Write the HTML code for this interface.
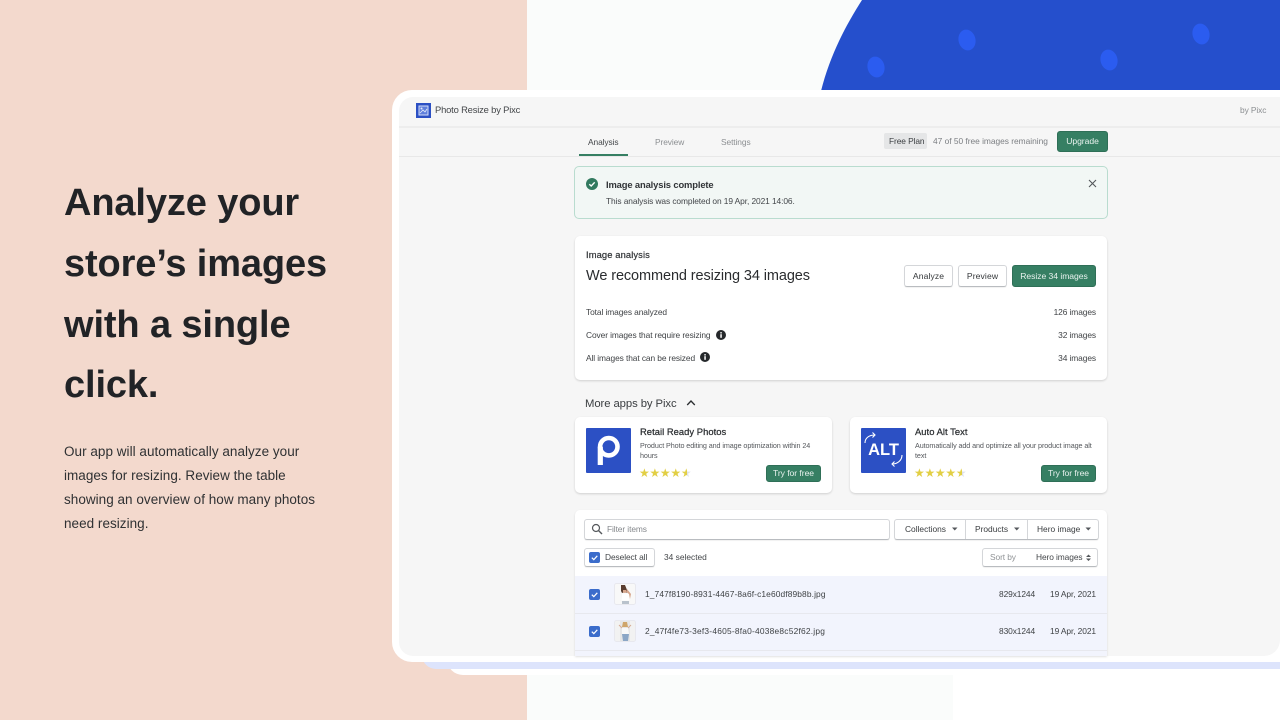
<!DOCTYPE html>
<html><head><meta charset="utf-8">
<style>
html,body{margin:0;padding:0;width:1280px;height:720px;overflow:hidden;background:#fff}
body{position:relative;font-family:"Liberation Sans",sans-serif;color:#202223}
.a,.t{position:absolute}
.t{white-space:nowrap;line-height:14px;font-size:8.4px;letter-spacing:-.09px;color:#3f4245;filter:blur(.25px)}
.h{left:64px;font-size:38px;line-height:46px;font-weight:700;color:#212326;white-space:nowrap;position:absolute;letter-spacing:-.12px}
.p{left:64px;font-size:13.5px;line-height:24px;color:#2f3133;white-space:nowrap;position:absolute;letter-spacing:.03px}
.card{position:absolute;background:#fff;border-radius:5px;box-shadow:0 1px 2px rgba(0,0,0,.16)}
.btn{position:absolute;background:#fff;border:1px solid #d4d6d9;border-bottom-color:#b9bcc0;border-radius:3px;box-sizing:border-box;text-align:center;font-size:8.6px;color:#34373a;letter-spacing:.1px;white-space:nowrap;box-shadow:0 1px 1px rgba(0,0,0,.06)}
.g{position:absolute;background:#367f63;border-radius:3px;box-sizing:border-box;border:1px solid #2f6f57;text-align:center;font-size:8.6px;color:#e8f2ee;letter-spacing:-.05px;white-space:nowrap}
.cb{position:absolute;width:11px;height:11px;background:#3b6ccb;border-radius:2px}
.cb svg{display:block}
.stars{position:absolute;color:#e2cf45;font-size:12px;letter-spacing:-.3px;line-height:12px;white-space:nowrap}
.d{font-size:7.2px;line-height:10px;color:#55585c;letter-spacing:-.09px}
</style></head><body>
<div class="a" style="left:0;top:0;width:527px;height:720px;background:#f3d9cd"></div>
<div class="a" style="left:527px;top:0;width:753px;height:720px;background:#fafcfb"></div>
<div class="a" style="left:953px;top:670px;width:327px;height:50px;background:#fff"></div>
<svg class="a" style="left:800px;top:0" width="480" height="92" viewBox="0 0 480 92">
<path d="M21 91C30 55 46 25 62 0H480V91Z" fill="#254fcc"/>
<ellipse cx="76" cy="67" rx="8.5" ry="10.5" transform="rotate(-14 76 67)" fill="#2b5cf0"/>
<ellipse cx="167" cy="40" rx="8.5" ry="10.5" transform="rotate(-14 167 40)" fill="#2b5cf0"/>
<ellipse cx="309" cy="60" rx="8.5" ry="10.5" transform="rotate(-14 309 60)" fill="#2b5cf0"/>
<ellipse cx="401" cy="34" rx="8.5" ry="10.5" transform="rotate(-14 401 34)" fill="#2b5cf0"/>
</svg>

<div class="h" style="top:180px">Analyze your</div>
<div class="h" style="top:241px">store’s images</div>
<div class="h" style="top:302px">with a single</div>
<div class="h" style="top:362px">click.</div>
<div class="p" style="top:440px">Our app will automatically analyze your</div>
<div class="p" style="top:464px">images for resizing. Review the table</div>
<div class="p" style="top:488px">showing an overview of how many photos</div>
<div class="p" style="top:512px">need resizing.</div>

<div class="a" style="left:447px;top:640px;width:900px;height:35px;background:#fff;border-radius:0 0 0 16px"></div>
<div class="a" style="left:422px;top:640px;width:900px;height:29px;background:#dde4fc;border-radius:0 0 0 14px"></div>
<div class="a" style="left:392px;top:90px;width:920px;height:572px;background:#fff;border-radius:20px"></div>
<div class="a" style="left:399px;top:97px;width:881px;height:559px;background:#f6f6f6;border-radius:14px 0 16px 14px;overflow:hidden">
  <div class="a" style="left:0;top:29px;width:881px;height:2px;background:#ededed"></div>
  <div class="a" style="left:0;top:59px;width:881px;height:1px;background:#e8e8e8"></div>
  <div class="a" style="left:180px;top:57px;width:49px;height:2px;background:#367f63"></div>
</div>

<svg class="a" style="left:416px;top:103px" width="15" height="15" viewBox="0 0 15 15">
<rect width="15" height="15" fill="#2c50c4"/>
<rect x="3" y="3" width="9" height="9" fill="#5f7fdc" stroke="#d5def7" stroke-width="1"/>
<path d="M4 10l3-3 2 2 2-3" stroke="#e6ecfb" fill="none" stroke-width=".8"/>
<circle cx="5.5" cy="5.5" r="1" fill="#e6ecfb"/>
</svg>
<div class="t" style="left:435px;top:103px;font-size:9.4px;color:#44474a;letter-spacing:-.17px">Photo Resize by Pixc</div>
<div class="t" style="left:1240px;top:103px;color:#8b8e91">by Pixc</div>

<div class="t" style="left:588px;top:135px;color:#44474a">Analysis</div>
<div class="t" style="left:655px;top:135px;color:#8c8f92">Preview</div>
<div class="t" style="left:721px;top:135px;color:#8c8f92">Settings</div>

<div class="a" style="left:884px;top:133px;width:43px;height:16px;background:#e5e6e7;border-radius:2px"></div>
<div class="t" style="left:889px;top:134px;color:#3c3f42">Free Plan</div>
<div class="t" style="left:933px;top:134px;color:#7c7f83;letter-spacing:-.02px">47 of 50 free images remaining</div>
<div class="g" style="left:1057px;top:131px;width:51px;height:21px;line-height:19px">Upgrade</div>

<div class="a" style="left:574px;top:166px;width:534px;height:53px;box-sizing:border-box;background:#f2f7f5;border:1px solid #b9dccf;border-radius:5px"></div>
<svg class="a" style="left:586px;top:178px" width="12" height="12" viewBox="0 0 12 12"><circle cx="6" cy="6" r="6" fill="#327a5f"/><path d="M3.3 6.2l1.9 1.8 3.5-3.7" stroke="#fff" stroke-width="1.4" fill="none"/></svg>
<div class="t" style="left:606px;top:178px;font-size:9.4px;font-weight:700;color:#313437;letter-spacing:-.13px">Image analysis complete</div>
<div class="t" style="left:606px;top:194px;color:#43464a">This analysis was completed on 19 Apr, 2021 14:06.</div>
<svg class="a" style="left:1088px;top:179px" width="9" height="9" viewBox="0 0 9 9"><path d="M1 1l7 7M8 1L1 8" stroke="#54575b" stroke-width="1.1"/></svg>

<div class="card" style="left:575px;top:236px;width:532px;height:144px"></div>
<div class="t" style="left:586px;top:248px;font-size:9.4px;color:#2f3235;-webkit-text-stroke:.2px #2f3235;letter-spacing:.1px">Image analysis</div>
<div class="t" style="left:586px;top:267px;font-size:14.5px;line-height:18px;color:#2a2c2f;letter-spacing:-.1px">We recommend resizing 34 images</div>
<div class="btn" style="left:904px;top:265px;width:49px;height:22px;line-height:20px">Analyze</div>
<div class="btn" style="left:958px;top:265px;width:49px;height:22px;line-height:20px">Preview</div>
<div class="g" style="left:1012px;top:265px;width:84px;height:22px;line-height:20px">Resize 34 images</div>

<div class="t" style="left:586px;top:305px">Total images analyzed</div>
<div class="t" style="left:586px;top:328px">Cover images that require resizing</div>
<div class="t" style="left:586px;top:351px">All images that can be resized</div>
<svg class="a" style="left:716px;top:330px" width="10" height="10" viewBox="0 0 10 10"><circle cx="5" cy="5" r="5" fill="#25282b"/><rect x="4.3" y="4.2" width="1.5" height="3.6" fill="#fff"/><rect x="4.3" y="2.1" width="1.5" height="1.4" fill="#fff"/></svg>
<svg class="a" style="left:700px;top:352px" width="10" height="10" viewBox="0 0 10 10"><circle cx="5" cy="5" r="5" fill="#25282b"/><rect x="4.3" y="4.2" width="1.5" height="3.6" fill="#fff"/><rect x="4.3" y="2.1" width="1.5" height="1.4" fill="#fff"/></svg>
<div class="t" style="right:184px;top:305px">126 images</div>
<div class="t" style="right:184px;top:328px">32 images</div>
<div class="t" style="right:184px;top:351px">34 images</div>

<div class="t" style="left:585px;top:397px;font-size:11.3px;color:#3a3d40;letter-spacing:-.08px">More apps by Pixc</div>
<svg class="a" style="left:686px;top:399px" width="10" height="8" viewBox="0 0 10 8"><path d="M1.2 6L5 2l3.8 4" stroke="#2a2d30" stroke-width="1.3" fill="none"/></svg>

<div class="card" style="left:575px;top:417px;width:257px;height:76px"></div>
<div class="a" style="left:586px;top:428px;width:45px;height:45px;background:#2c50c4;border-radius:1px"></div>
<svg class="a" style="left:586px;top:428px" width="45" height="45" viewBox="0 0 45 45" fill="none" stroke="#fff"><circle cx="22.800" cy="18.700" r="8.700" stroke-width="4.600"/><path d="M14.300 18.700V37" stroke-width="5.200"/></svg>
<div class="t" style="left:640px;top:425px;font-size:9.4px;color:#2d3033;-webkit-text-stroke:.25px #2d3033;letter-spacing:.04px">Retail Ready Photos</div>
<div class="t d" style="left:640px;top:441px">Product Photo editing and image optimization within 24<br>hours</div>
<div class="stars" style="left:639px;top:467px">★★★★<span style="background:linear-gradient(90deg,#e2cf45 60%,#dde1ec 60%);-webkit-background-clip:text;background-clip:text;color:transparent">★</span></div>
<div class="g" style="left:766px;top:465px;width:55px;height:17px;line-height:15px">Try for free</div>

<div class="card" style="left:850px;top:417px;width:257px;height:76px"></div>
<div class="a" style="left:861px;top:428px;width:45px;height:45px;background:#2c50c4;border-radius:1px"></div>
<div class="a" style="left:861px;top:441px;width:45px;text-align:center;font-size:16.5px;line-height:18px;font-weight:700;color:#fff">ALT</div>
<svg class="a" style="left:861px;top:428px" width="45" height="45" viewBox="0 0 45 45" fill="none" stroke="#fff" stroke-width="1.1"><path d="M4 15C4 10 8 7 14 7M11.500 4.500L14 7l-2.500 2.500M41 27c0 5-4 9-10 9M33.500 33.500L31 36l2.500 2.500"/></svg>
<div class="t" style="left:915px;top:425px;font-size:9.4px;color:#2d3033;-webkit-text-stroke:.25px #2d3033;letter-spacing:.04px">Auto Alt Text</div>
<div class="t d" style="left:915px;top:441px">Automatically add and optimize all your product image alt<br>text</div>
<div class="stars" style="left:914px;top:467px">★★★★<span style="background:linear-gradient(90deg,#e2cf45 60%,#dde1ec 60%);-webkit-background-clip:text;background-clip:text;color:transparent">★</span></div>
<div class="g" style="left:1041px;top:465px;width:55px;height:17px;line-height:15px">Try for free</div>

<div class="a" style="left:575px;top:510px;width:532px;height:146px;background:#fff;border-radius:5px 5px 0 0;box-shadow:0 1px 2px rgba(0,0,0,.12);overflow:hidden">
  <div class="a" style="left:0;top:66px;width:532px;height:37px;background:#f2f4fd"></div>
  <div class="a" style="left:0;top:103px;width:532px;height:1px;background:#e7e8ee"></div>
  <div class="a" style="left:0;top:104px;width:532px;height:36px;background:#f2f4fd"></div>
  <div class="a" style="left:0;top:140px;width:532px;height:1px;background:#e7e8ee"></div>
  <div class="a" style="left:0;top:141px;width:532px;height:6px;background:#f2f4fd"></div>
</div>
<div class="btn" style="left:584px;top:519px;width:306px;height:21px;background:#fff"></div>
<svg class="a" style="left:591px;top:523px" width="12" height="12" viewBox="0 0 12 12"><circle cx="5" cy="5" r="3.500" stroke="#55585c" stroke-width="1.2" fill="none"/><path d="M7.600 7.600L11 11" stroke="#55585c" stroke-width="1.400"/></svg>
<div class="t" style="left:607px;top:522px;color:#85888c">Filter items</div>
<div class="btn" style="left:894px;top:519px;width:205px;height:21px"></div>
<div class="a" style="left:965px;top:520px;width:1px;height:19px;background:#d4d6d9"></div>
<div class="a" style="left:1027px;top:520px;width:1px;height:19px;background:#d4d6d9"></div>
<div class="t" style="left:905px;top:522px;color:#393c3f;letter-spacing:0">Collections</div>
<div class="t" style="left:975px;top:522px;color:#393c3f;letter-spacing:0">Products</div>
<div class="t" style="left:1037px;top:522px;color:#393c3f;letter-spacing:0">Hero image</div>

<div class="btn" style="left:584px;top:548px;width:71px;height:19px"></div>
<div class="cb" style="left:589px;top:552px"><svg width="11" height="11" viewBox="0 0 11 11"><path d="M2.800 5.700l2 1.900 3.500-3.800" stroke="#fff" stroke-width="1.200" fill="none"/></svg></div>
<div class="t" style="left:605px;top:550px;color:#44474a">Deselect all</div>
<div class="t" style="left:664px;top:550px;color:#44474a;letter-spacing:0">34 selected</div>
<div class="btn" style="left:982px;top:548px;width:116px;height:19px"></div>
<div class="t" style="left:990px;top:550px;color:#909396">Sort by</div>
<div class="t" style="left:1036px;top:550px;color:#44474a">Hero images</div>
<svg class="a" style="left:0;top:0" width="1280" height="720" fill="#55585c"><path d="M952 527.500h5.500l-2.750 3zM1014 527.500h5.500l-2.750 3zM1085.500 527.500h5.500l-2.750 3zM1086 557h5l-2.500-2.500zM1086 558.500h5l-2.500 2.500z"/></svg>

<div class="cb" style="left:589px;top:589px"><svg width="11" height="11" viewBox="0 0 11 11"><path d="M2.800 5.700l2 1.900 3.500-3.800" stroke="#fff" stroke-width="1.200" fill="none"/></svg></div>
<div class="cb" style="left:589px;top:626px"><svg width="11" height="11" viewBox="0 0 11 11"><path d="M2.800 5.700l2 1.900 3.500-3.800" stroke="#fff" stroke-width="1.200" fill="none"/></svg></div>
<svg class="a" style="left:614px;top:583px" width="22" height="22" viewBox="0 0 22 22"><rect x=".5" y=".5" width="21" height="21" rx="2" fill="#f8f8f8" stroke="#e8e8ee"/><path d="M7 2h4l2 5-1 5H9L7 8z" fill="#5a3d30"/><path d="M9 7h3v3H9z" fill="#d7a78e"/><path d="M8 10h7l1 8H7z" fill="#fff" stroke="#eee" stroke-width=".3"/><path d="M13 6l4 5-1 5-1-5-3-2z" fill="#d7a78e"/><path d="M8 18h7v3H8z" fill="#b9c2cc"/></svg>
<svg class="a" style="left:614px;top:620px" width="22" height="22" viewBox="0 0 22 22"><rect x=".5" y=".5" width="21" height="21" rx="2" fill="#f2f2f2" stroke="#e8e8ee"/><rect x="6" y="1" width="10" height="20" fill="#e6e6e6"/><path d="M9 2h4l1 5H8z" fill="#cfa56a"/><path d="M8 8h6l1 6H8z" fill="#f8f8f8"/><path d="M8 8L5 5M14 8l3-3" stroke="#d6ab94"/><path d="M8 14h7l-1 7H9z" fill="#8ba6c6"/></svg>
<div class="t" style="left:645px;top:587px;letter-spacing:.12px">1_747f8190-8931-4467-8a6f-c1e60df89b8b.jpg</div>
<div class="t" style="left:645px;top:624px;letter-spacing:.22px">2_47f4fe73-3ef3-4605-8fa0-4038e8c52f62.jpg</div>
<div class="t" style="left:999px;top:587px">829x1244</div>
<div class="t" style="left:999px;top:624px">830x1244</div>
<div class="t" style="left:1050px;top:587px">19 Apr, 2021</div>
<div class="t" style="left:1050px;top:624px">19 Apr, 2021</div>
</body></html>
